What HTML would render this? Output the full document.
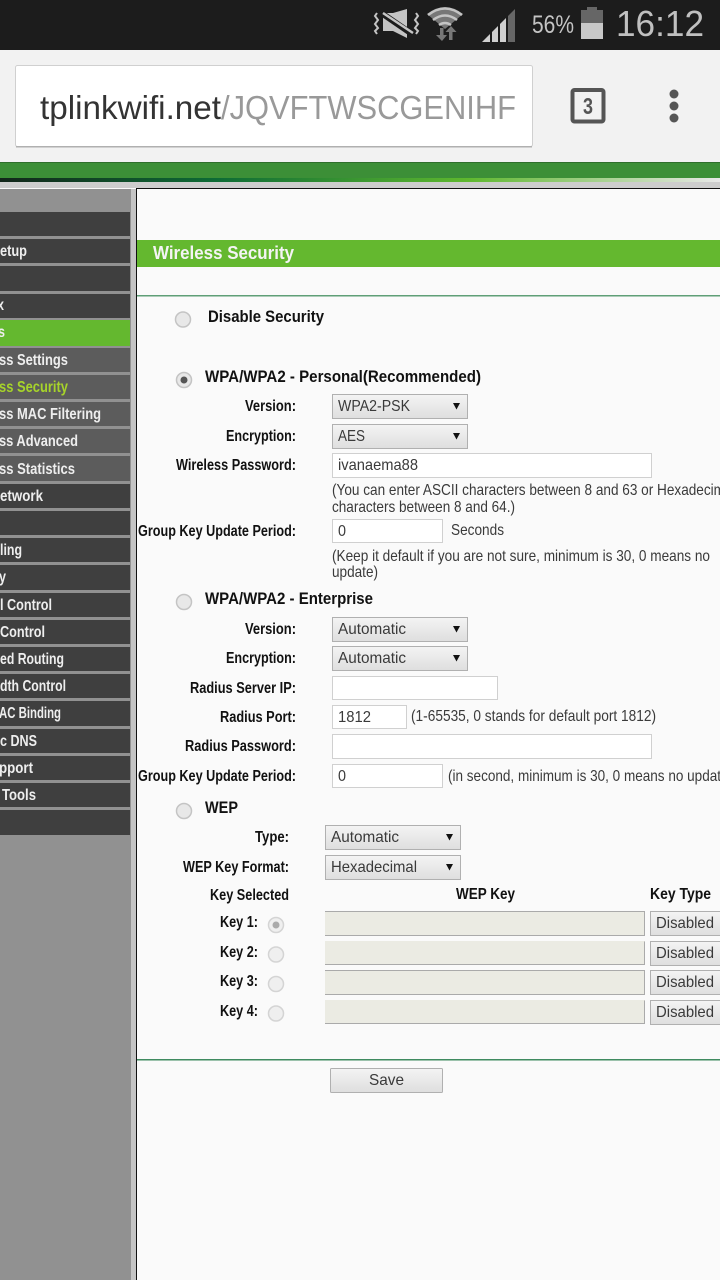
<!DOCTYPE html>
<html lang="en"><head><meta charset="utf-8"><title>Wireless Security</title>
<style>
html,body{margin:0;padding:0;width:720px;height:1280px;overflow:hidden;background:#fafafa}
svg{display:block}
text{font-family:"Liberation Sans",sans-serif;white-space:pre}
.b{font-weight:700;font-size:16px;fill:#111}
.h{font-weight:700;font-size:17px;fill:#111}
.n{font-size:16px;fill:#3a3a3a}
.m{font-weight:700;font-size:16px;fill:#eee}
.i{fill:#fff;stroke:#d0d0d0}
</style></head><body>
<svg width="720" height="1280" viewBox="0 0 720 1280" xmlns="http://www.w3.org/2000/svg">
<defs>
<linearGradient id="sel" x1="0" y1="0" x2="0" y2="1"><stop offset="0" stop-color="#f4f4f4"/><stop offset="1" stop-color="#dedede"/></linearGradient>
<linearGradient id="strip" x1="0" y1="0" x2="1" y2="0"><stop offset="0" stop-color="#12261a"/><stop offset=".3" stop-color="#0d6b35"/><stop offset=".65" stop-color="#5eb82e"/><stop offset="1" stop-color="#e8e8e8"/></linearGradient>
</defs>
<!-- status bar -->
<rect width="720" height="50" fill="#1c1c1c"/>
<g fill="none" stroke="#c4c4c4" stroke-width="2">
<path d="M377 13l-2 3 3 4-3 4 3 4-3 3 2 3"/>
<path d="M416 13l2 3-3 4 3 4-3 4 3 3-2 3"/>
</g>
<path d="M383 13h10l14-4v29l-14-7h-10z" fill="#c4c4c4"/>
<path d="M380 12l32 22" stroke="#1c1c1c" stroke-width="6"/>
<path d="M383 13l30 20" stroke="#c4c4c4" stroke-width="2.500"/>
<path d="M427 14q18-14 36 0l-18 15z" fill="#777"/>
<g fill="none" stroke="#c4c4c4" stroke-width="2.500">
<path d="M428 15q17-13 34 0"/><path d="M433 20q12-9 24 0"/><path d="M439 25q6-4 12 0"/>
</g>
<path d="M440 28h3.500v7h3.500l-5 6-6-6h4z" fill="#777"/>
<path d="M449 40h3.500v-8h4l-5.500-6-5.500 6h3.500z" fill="#777"/>
<path d="M482 42l8-8v8z" fill="#d0d0d0"/><path d="M492 32l6-6v16h-6z" fill="#d0d0d0"/><path d="M500 24l6-6v24h-6z" fill="#d0d0d0"/><path d="M508 16l7-7v33h-7z" fill="#666"/>
<text x="532" y="33" font-size="25" fill="#c4c4c4" textLength="42" lengthAdjust="spacingAndGlyphs">56%</text>
<rect x="587" y="7" width="10" height="4" fill="#666"/>
<rect x="581" y="10" width="22" height="13" fill="#666"/>
<rect x="581" y="23" width="22" height="16" fill="#c8c8c8"/>
<text x="616" y="36" font-size="36" fill="#c0c0c0" textLength="88" lengthAdjust="spacingAndGlyphs">16:12</text>
<!-- toolbar -->
<rect y="50" width="720" height="112" fill="#f2f2f2"/>
<rect x="15.500" y="65.500" width="517" height="81" rx="2" fill="#fff" stroke="#d0d0d0"/>
<rect x="16" y="146" width="516" height="1.500" fill="#b0b0b0"/>
<text x="40" y="119" font-size="33" fill="#333" textLength="181" lengthAdjust="spacingAndGlyphs">tplinkwifi.net</text>
<text x="221" y="119" font-size="33" fill="#999" textLength="295" lengthAdjust="spacingAndGlyphs">/JQVFTWSCGENIHF</text>
<rect x="572.500" y="90" width="31" height="31.500" rx="2" fill="none" stroke="#555" stroke-width="4"/>
<text x="583" y="114" font-size="23" font-weight="700" fill="#555" textLength="10" lengthAdjust="spacingAndGlyphs">3</text>
<circle cx="674" cy="94" r="4.500" fill="#555"/><circle cx="674" cy="106" r="4.500" fill="#555"/><circle cx="674" cy="118" r="4.500" fill="#555"/>
<!-- green band -->
<rect y="162" width="720" height="17" fill="#3c8f37"/>
<rect y="162" width="720" height="1" fill="#2f6f2c"/>
<rect y="178" width="720" height="4" fill="url(#strip)"/>
<rect y="182" width="720" height="6" fill="#cdcdcd"/>
<!-- page -->
<rect y="189" width="131" height="1091" fill="#919191"/>
<rect x="131" y="189" width="5" height="1091" fill="#c4c4c4"/>
<rect x="136" y="188" width="584" height="1" fill="#111"/>
<rect x="136" y="188" width="1" height="1092" fill="#111"/>
<rect x="137" y="189" width="583" height="1091" fill="#fafafa"/>
<!-- sidebar -->
<g fill="#3f3f3f">
<rect y="212" width="130" height="24"/><rect y="239" width="130" height="24"/><rect y="266" width="130" height="25"/><rect y="294" width="130" height="24"/>
<rect y="484" width="130" height="24"/><rect y="511" width="130" height="24"/><rect y="538" width="130" height="24"/><rect y="565" width="130" height="25"/><rect y="593" width="130" height="24"/><rect y="620" width="130" height="24"/><rect y="647" width="130" height="24"/><rect y="674" width="130" height="24"/><rect y="701" width="130" height="25"/><rect y="729" width="130" height="24"/><rect y="756" width="130" height="24"/><rect y="783" width="130" height="24"/><rect y="810" width="130" height="25"/>
</g>
<rect y="320" width="130" height="26" fill="#64b82f"/>
<g fill="#5c5c5c">
<rect y="348" width="130" height="24"/><rect y="375" width="130" height="24"/><rect y="402" width="130" height="24"/><rect y="429" width="130" height="24"/><rect y="456" width="130" height="25"/>
</g>
<text class="m" x="0" y="256" textLength="27" lengthAdjust="spacingAndGlyphs">etup</text>
<text class="m" x="-3" y="310" textLength="7" lengthAdjust="spacingAndGlyphs">x</text>
<text class="m" x="-2" y="337" textLength="7" lengthAdjust="spacingAndGlyphs">s</text>
<text class="m" x="-1" y="365" textLength="69" lengthAdjust="spacingAndGlyphs">ss Settings</text>
<text class="m" x="-1" y="392" style="fill:#a6d32a" textLength="69" lengthAdjust="spacingAndGlyphs">ss Security</text>
<text class="m" x="-1" y="419" textLength="102" lengthAdjust="spacingAndGlyphs">ss MAC Filtering</text>
<text class="m" x="-1" y="446" textLength="79" lengthAdjust="spacingAndGlyphs">ss Advanced</text>
<text class="m" x="-1" y="474" textLength="76" lengthAdjust="spacingAndGlyphs">ss Statistics</text>
<text class="m" x="0" y="501" textLength="43" lengthAdjust="spacingAndGlyphs">etwork</text>
<text class="m" x="0" y="555" textLength="22" lengthAdjust="spacingAndGlyphs">ling</text>
<text class="m" x="-1" y="582" textLength="7" lengthAdjust="spacingAndGlyphs">y</text>
<text class="m" x="0" y="610" textLength="52" lengthAdjust="spacingAndGlyphs">l Control</text>
<text class="m" x="0" y="637" textLength="45" lengthAdjust="spacingAndGlyphs">Control</text>
<text class="m" x="0" y="664" textLength="64" lengthAdjust="spacingAndGlyphs">ed Routing</text>
<text class="m" x="0" y="691" textLength="66" lengthAdjust="spacingAndGlyphs">dth Control</text>
<text class="m" x="-1" y="718" textLength="62" lengthAdjust="spacingAndGlyphs">AC Binding</text>
<text class="m" x="0" y="746" textLength="37" lengthAdjust="spacingAndGlyphs">c DNS</text>
<text class="m" x="-1" y="773" textLength="34" lengthAdjust="spacingAndGlyphs">pport</text>
<text class="m" x="2" y="800" textLength="34" lengthAdjust="spacingAndGlyphs">Tools</text>
<!-- title -->
<rect x="137" y="240" width="583" height="27" fill="#64b82f"/>
<text x="153" y="259" font-size="18" font-weight="700" fill="#f4f4f4" textLength="141" lengthAdjust="spacingAndGlyphs">Wireless Security</text>
<rect x="137" y="295" width="583" height="1.500" fill="#5f9f77"/>
<rect x="137" y="1059" width="583" height="1.500" fill="#3f8a5f"/>
<!-- radios -->
<g fill="#e8e8e8" stroke="#c4c4c4" stroke-width="1.500">
<circle cx="183" cy="319.500" r="7.500"/><circle cx="184" cy="380" r="7.500"/><circle cx="184" cy="602" r="7.500"/><circle cx="184" cy="811" r="7.500"/>
</g>
<g fill="#efefef" stroke="#d4d4d4" stroke-width="1.500">
<circle cx="276" cy="925" r="7.500"/><circle cx="276" cy="954.500" r="7.500"/><circle cx="276" cy="984" r="7.500"/><circle cx="276" cy="1013.500" r="7.500"/>
</g>
<circle cx="184" cy="380" r="3.500" fill="#555"/>
<circle cx="276" cy="925" r="3.500" fill="#aaa"/>
<!-- headings -->
<text class="h" x="208" y="322" textLength="116" lengthAdjust="spacingAndGlyphs">Disable Security</text>
<text class="h" x="205" y="382" textLength="276" lengthAdjust="spacingAndGlyphs">WPA/WPA2 - Personal(Recommended)</text>
<text class="h" x="205" y="604" textLength="168" lengthAdjust="spacingAndGlyphs">WPA/WPA2 - Enterprise</text>
<text class="h" x="205" y="813" textLength="33" lengthAdjust="spacingAndGlyphs">WEP</text>
<!-- labels -->
<text class="b" x="245" y="411" textLength="51" lengthAdjust="spacingAndGlyphs">Version:</text>
<text class="b" x="226" y="441" textLength="70" lengthAdjust="spacingAndGlyphs">Encryption:</text>
<text class="b" x="176" y="470" textLength="120" lengthAdjust="spacingAndGlyphs">Wireless Password:</text>
<text class="b" x="138" y="536" textLength="158" lengthAdjust="spacingAndGlyphs">Group Key Update Period:</text>
<text class="b" x="245" y="634" textLength="51" lengthAdjust="spacingAndGlyphs">Version:</text>
<text class="b" x="226" y="663" textLength="70" lengthAdjust="spacingAndGlyphs">Encryption:</text>
<text class="b" x="190" y="693" textLength="106" lengthAdjust="spacingAndGlyphs">Radius Server IP:</text>
<text class="b" x="220" y="722" textLength="76" lengthAdjust="spacingAndGlyphs">Radius Port:</text>
<text class="b" x="185" y="751" textLength="111" lengthAdjust="spacingAndGlyphs">Radius Password:</text>
<text class="b" x="138" y="781" textLength="158" lengthAdjust="spacingAndGlyphs">Group Key Update Period:</text>
<text class="b" x="255" y="842" textLength="34" lengthAdjust="spacingAndGlyphs">Type:</text>
<text class="b" x="183" y="872" textLength="106" lengthAdjust="spacingAndGlyphs">WEP Key Format:</text>
<text class="b" x="210" y="900" textLength="79" lengthAdjust="spacingAndGlyphs">Key Selected</text>
<text class="b" x="456" y="899" textLength="59" lengthAdjust="spacingAndGlyphs">WEP Key</text>
<text class="b" x="650" y="899" textLength="61" lengthAdjust="spacingAndGlyphs">Key Type</text>
<text class="b" x="220" y="927" textLength="38" lengthAdjust="spacingAndGlyphs">Key 1:</text>
<text class="b" x="220" y="957" textLength="38" lengthAdjust="spacingAndGlyphs">Key 2:</text>
<text class="b" x="220" y="986" textLength="38" lengthAdjust="spacingAndGlyphs">Key 3:</text>
<text class="b" x="220" y="1016" textLength="38" lengthAdjust="spacingAndGlyphs">Key 4:</text>
<!-- selects -->
<g fill="url(#sel)" stroke="#b0b0b0">
<rect x="332.500" y="394.500" width="135" height="24"/><rect x="332.500" y="424.500" width="135" height="24"/>
<rect x="332.500" y="617.500" width="135" height="24"/><rect x="332.500" y="646.500" width="135" height="24"/>
<rect x="325.500" y="825.500" width="135" height="24"/><rect x="325.500" y="855.500" width="135" height="24"/>
<rect x="650.500" y="911.500" width="90" height="24"/><rect x="650.500" y="941.500" width="90" height="24"/><rect x="650.500" y="970.500" width="90" height="24"/><rect x="650.500" y="1000.500" width="90" height="24"/>
<rect x="330.500" y="1068.500" width="112" height="24" rx="1"/>
</g>
<g fill="#111">
<path d="M453 403h7l-3.500 6.500z"/><path d="M453 433h7l-3.500 6.500z"/><path d="M453 626h7l-3.500 6.500z"/><path d="M453 655h7l-3.500 6.500z"/><path d="M446 834h7l-3.500 6.500z"/><path d="M446 864h7l-3.500 6.500z"/>
</g>
<text class="n" x="338" y="411" textLength="72" lengthAdjust="spacingAndGlyphs">WPA2-PSK</text>
<text class="n" x="338" y="441" textLength="27" lengthAdjust="spacingAndGlyphs">AES</text>
<text class="n" x="338" y="634" textLength="68" lengthAdjust="spacingAndGlyphs">Automatic</text>
<text class="n" x="338" y="663" textLength="68" lengthAdjust="spacingAndGlyphs">Automatic</text>
<text class="n" x="331" y="842" textLength="68" lengthAdjust="spacingAndGlyphs">Automatic</text>
<text class="n" x="331" y="872" textLength="86" lengthAdjust="spacingAndGlyphs">Hexadecimal</text>
<text class="n" x="656" y="928" textLength="58" lengthAdjust="spacingAndGlyphs">Disabled</text>
<text class="n" x="656" y="958" textLength="58" lengthAdjust="spacingAndGlyphs">Disabled</text>
<text class="n" x="656" y="987" textLength="58" lengthAdjust="spacingAndGlyphs">Disabled</text>
<text class="n" x="656" y="1017" textLength="58" lengthAdjust="spacingAndGlyphs">Disabled</text>
<text class="n" x="369" y="1085" textLength="35" lengthAdjust="spacingAndGlyphs">Save</text>
<!-- inputs -->
<rect class="i" x="332.500" y="453.500" width="319" height="24"/>
<rect class="i" x="332.500" y="519.500" width="110" height="23"/>
<rect class="i" x="332.500" y="676.500" width="165" height="23"/>
<rect class="i" x="332.500" y="705.500" width="74" height="23"/>
<rect class="i" x="332.500" y="734.500" width="319" height="24"/>
<rect class="i" x="332.500" y="764.500" width="110" height="23"/>
<text class="n" x="338" y="470" textLength="80" lengthAdjust="spacingAndGlyphs">ivanaema88</text>
<text class="n" x="338" y="536" textLength="8" lengthAdjust="spacingAndGlyphs">0</text>
<text class="n" x="338" y="722" textLength="33" lengthAdjust="spacingAndGlyphs">1812</text>
<text class="n" x="338" y="781" textLength="8" lengthAdjust="spacingAndGlyphs">0</text>
<!-- key fields -->
<g fill="#ebebe3" stroke="none">
<rect x="325" y="911" width="320" height="25"/><rect x="325" y="941" width="320" height="24"/><rect x="325" y="970" width="320" height="25"/><rect x="325" y="1000" width="320" height="24"/>
</g>
<g fill="none" stroke="#aaa">
<path d="M325 911.500h319.500v24h-319.500"/><path d="M325 964.500h319.500v-23"/><path d="M325 970.500h319.500v24h-319.500"/><path d="M325 1023.500h319.500v-23"/>
</g>
<!-- help text -->
<text class="n" x="332" y="495" textLength="393" lengthAdjust="spacingAndGlyphs">(You can enter ASCII characters between 8 and 63 or Hexadecim</text>
<text class="n" x="332" y="512" textLength="183" lengthAdjust="spacingAndGlyphs">characters between 8 and 64.)</text>
<text class="n" x="451" y="535" textLength="53" lengthAdjust="spacingAndGlyphs">Seconds</text>
<text class="n" x="332" y="561" textLength="378" lengthAdjust="spacingAndGlyphs">(Keep it default if you are not sure, minimum is 30, 0 means no</text>
<text class="n" x="332" y="577" textLength="46" lengthAdjust="spacingAndGlyphs">update)</text>
<text class="n" x="411" y="721" textLength="245" lengthAdjust="spacingAndGlyphs">(1-65535, 0 stands for default port 1812)</text>
<text class="n" x="448" y="781" textLength="273" lengthAdjust="spacingAndGlyphs">(in second, minimum is 30, 0 means no updat</text>
</svg>
</body></html>
